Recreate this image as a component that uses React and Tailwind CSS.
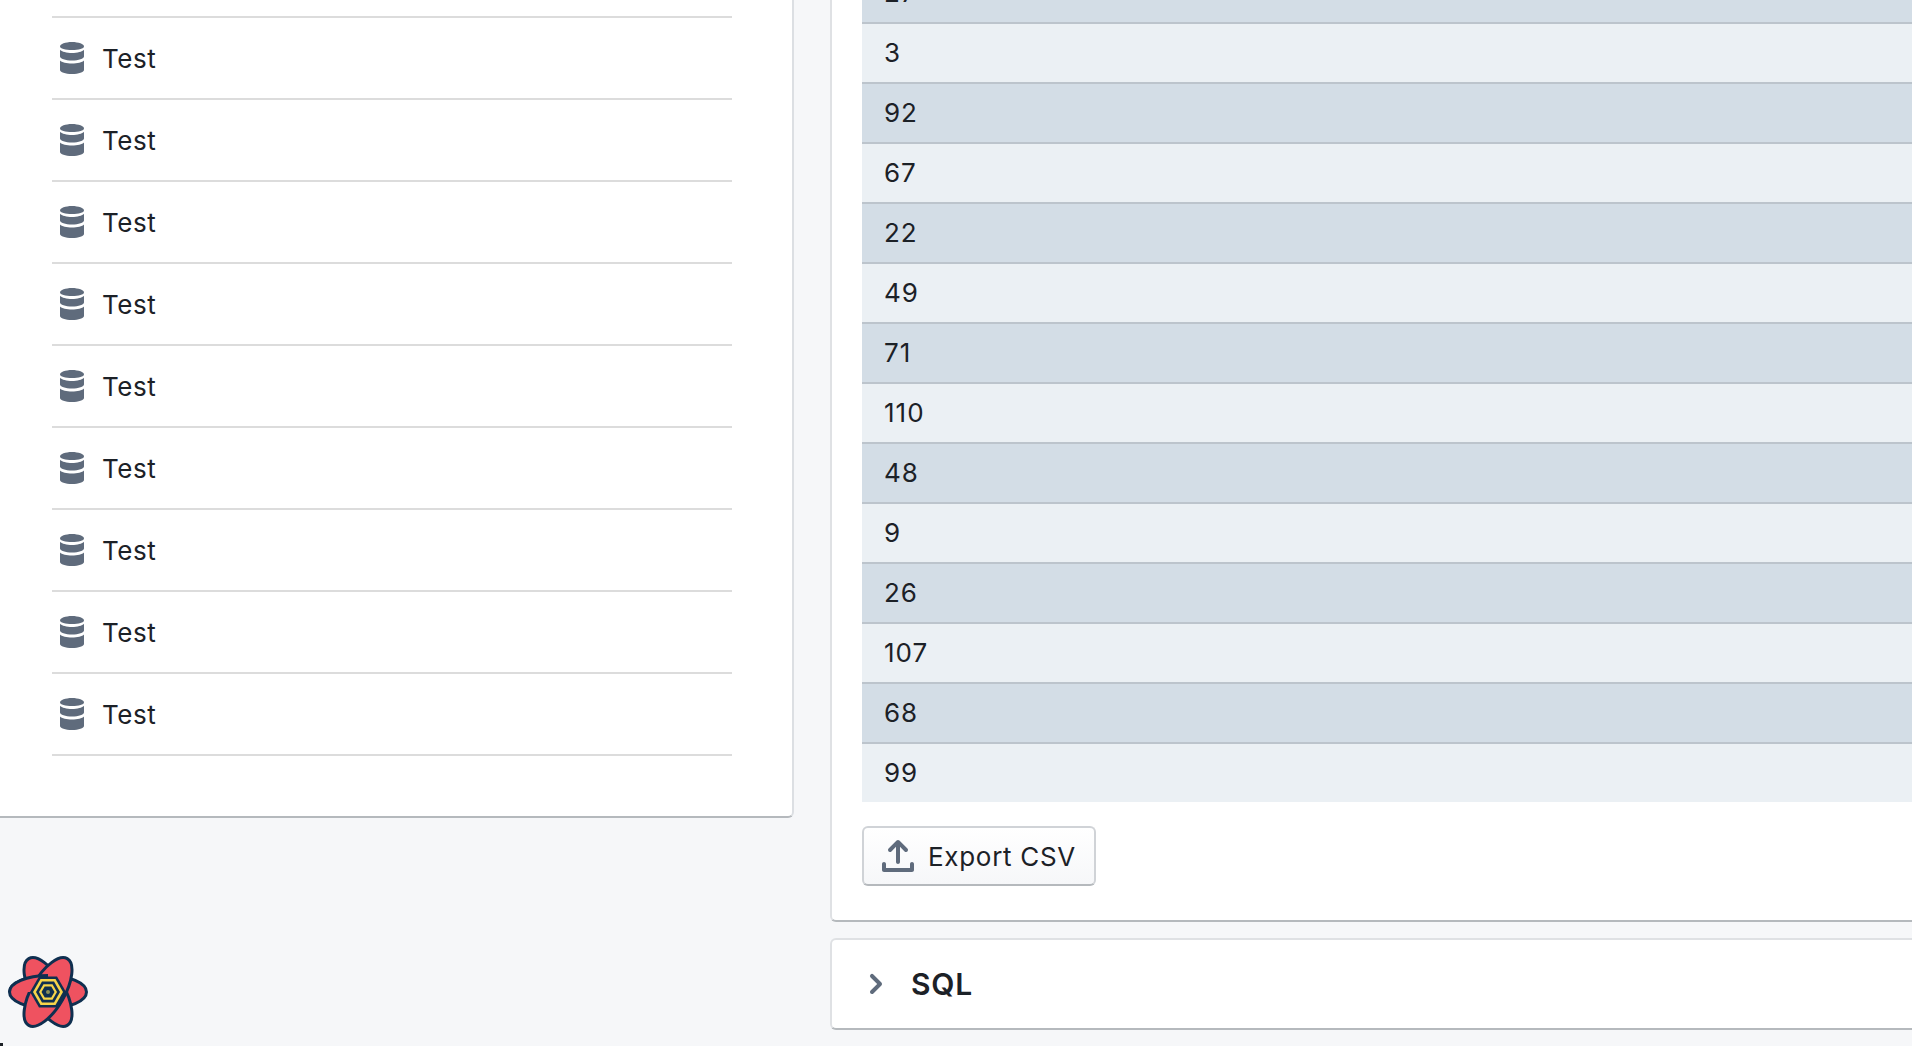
const values = [27, 3, 92, 67, 22, 49, 71, 110, 48, 9, 26, 107, 68, 99];
const databases = Array.from({ length: 10 }, (_, i) => i);

function DatabaseIcon() {
  return (
    <svg viewBox="0 0 16 16" className="w-8 h-8 fill-[#5f6b7c] shrink-0 -mt-px">
      <path d="M8 4c3.3 0 6-.8 6-1.8C14 1.1 11.3 0 8 0S2 1.1 2 2.2C2 3.2 4.7 4 8 4z" />
      <path d="M2 3.9v3.3c0 1.1 2.7 2 6 2s6-.9 6-2V3.9c-.9 1-3.3 1.6-6 1.6s-5.100-.6-6-1.600z" />
      <path d="M2 9.300V14c0 1.100 2.700 2 6 2s6-.9 6-2V9.300c-.9 1-3.300 1.500-6 1.500s-5.100-.5-6-1.500z" />
    </svg>
  );
}

function ExportIcon() {
  return (
    <svg viewBox="0 0 16 16" className="w-8 h-8 fill-[#5f6b7c] shrink-0">
      <path d="M4 6c.28 0 .53-.11.71-.29L7 3.41V11c0 .55.45 1 1 1s1-.45 1-1V3.41l2.29 2.29c.18.19.43.3.71.3a1.003 1.003 0 00.71-1.71l-4-4C8.53.11 8.28 0 8 0s-.53.11-.71.29l-4 4A1.003 1.003 0 004 6zm11 5c-.55 0-1 .45-1 1v2H2v-2c0-.55-.45-1-1-1s-1 .45-1 1v3c0 .55.45 1 1 1h14c.55 0 1-.45 1-1v-3c0-.55-.45-1-1-1z" />
    </svg>
  );
}

function ChevronIcon() {
  return (
    <svg viewBox="0 0 16 16" className="w-8 h-8 fill-[#5f6b7c] shrink-0">
      <path d="M10.71 7.29l-4-4a1.003 1.003 0 00-1.42 1.42L8.59 8 5.3 11.29c-.19.18-.3.43-.3.71a1.003 1.003 0 001.71.71l4-4c.18-.18.29-.43.29-.71 0-.28-.11-.53-.29-.71z" />
    </svg>
  );
}

function Logo() {
  const petal = { cx: 0, cy: 0, rx: 38.5, ry: 16.5, fill: '#ef5260', stroke: '#0f2f50', strokeWidth: 3 };
  return (
    <svg viewBox="-42 -37 84 74" className="absolute left-[6px] bottom-[17px] w-[84px] h-[74px]">
      <defs>
        <clipPath id="petal-top">
          <rect x="-42" y="-37" width="42" height="37" />
        </clipPath>
      </defs>
      <ellipse {...petal} />
      <ellipse {...petal} transform="rotate(60)" />
      <ellipse {...petal} transform="rotate(120)" />
      <g clipPath="url(#petal-top)">
        <ellipse {...petal} />
      </g>
      <polygon points="-18,0 -9,-15.600 9,-15.600 18,0 9,15.600 -9,15.600" fill="#0f2f50" />
      <polygon points="-15,0 -7.500,-13 7.500,-13 15,0 7.500,13 -7.500,13" fill="#f7d54a" />
      <polygon points="-12,0 -6,-10.400 6,-10.400 12,0 6,10.400 -6,10.400" fill="#0f2f50" />
      <polygon points="-9,0 -4.500,-7.800 4.500,-7.800 9,0 4.500,7.800 -4.500,7.800" fill="#f7d54a" />
      <polygon points="-6.500,0 -3.250,-5.600 3.250,-5.600 6.500,0 3.250,5.600 -3.250,5.600" fill="#0f2f50" />
      <circle r="2" fill="#8a8f5a" />
    </svg>
  );
}

export default function App() {
  return (
    <div className="relative flex gap-[36px] h-[1046px] w-[1912px] overflow-hidden bg-[#f6f7f9] text-[26px] tracking-[0.5px] text-[#1c2127] font-['Inter',sans-serif] antialiased">
      <div className="flex flex-col justify-end w-[794px] shrink-0 pb-[228px]">
        <div className="shrink-0 bg-white border-r-2 border-b-2 border-r-[#dcdfe3] border-b-[#b5b9bd] rounded-br-md pl-[52px] pb-[60px]">
          {databases.map((i) => (
            <div key={i} className="flex items-center gap-[14px] w-[680px] h-[82px] pl-1 border-b-2 border-[#dcdcdc]">
              <DatabaseIcon />
              <span>Test</span>
            </div>
          ))}
        </div>
      </div>

      <div className="flex flex-col justify-end w-[1200px] shrink-0 pb-[16px] gap-[16px]">
        <div className="shrink-0 bg-white border-2 border-[#dfe1e4] border-b-[#b5b9bd] rounded-md pl-[30px] pb-[34px]">
          <div className="flex flex-col tracking-[1px]">
            {values.map((v, i) => (
              <div
                key={i}
                className={`flex items-center h-[60px] last:h-[58px] pl-[22px] pb-[2px] border-b-2 last:border-b-0 border-[#bcc4cc] ${i % 2 === 0 ? 'bg-[#d3dde6]' : 'bg-[#ebf0f4]'}`}
              >
                {v}
              </div>
            ))}
          </div>
          <button className="flex items-center gap-[14px] w-[234px] h-[60px] mt-6 pl-[18px] rounded-md border-2 border-[#d0d3d7] border-b-[#b5b9bd] bg-gradient-to-b from-white to-[#f6f7f9]">
            <ExportIcon />
            <span className="tracking-[0.7px]">Export CSV</span>
          </button>
        </div>

        <div className="flex items-center shrink-0 h-[92px] pl-[28px] gap-[19px] bg-white border-2 border-[#dfe1e4] border-b-[#b5b9bd] rounded-md">
          <ChevronIcon />
          <span className="text-[30px] font-semibold tracking-[0.8px]">SQL</span>
        </div>
      </div>

      <Logo />
      <div className="absolute left-0 bottom-0 w-[3px] h-[3px] bg-[#1c2127]" />
    </div>
  );
}
